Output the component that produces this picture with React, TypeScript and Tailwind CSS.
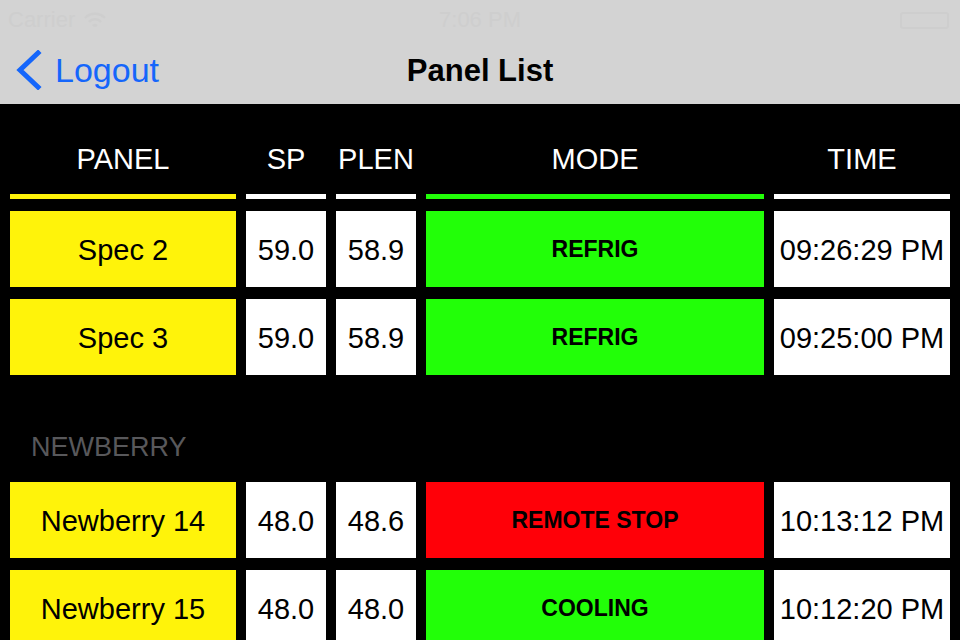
import React from 'react';

type Row = {
  name: string;
  sp: string;
  plen: string;
  mode: string;
  time: string;
};

const modeColor: Record<string, string> = {
  REFRIG: 'bg-[#22ff08]',
  COOLING: 'bg-[#22ff08]',
  'REMOTE STOP': 'bg-[#ff0008]',
};

const specRows: Row[] = [
  { name: 'Spec 2', sp: '59.0', plen: '58.9', mode: 'REFRIG', time: '09:26:29 PM' },
  { name: 'Spec 3', sp: '59.0', plen: '58.9', mode: 'REFRIG', time: '09:25:00 PM' },
];

const newberryRows: Row[] = [
  { name: 'Newberry 14', sp: '48.0', plen: '48.6', mode: 'REMOTE STOP', time: '10:13:12 PM' },
  { name: 'Newberry 15', sp: '48.0', plen: '48.0', mode: 'COOLING', time: '10:12:20 PM' },
];

const cols = 'grid grid-cols-[226px_80px_80px_338px_176px] gap-x-[10px] px-[10px]';

const PanelRow: React.FC<{ row: Row }> = ({ row }) => (
  <div className={`${cols} h-[76px] text-black text-[29px]`}>
    <div className="flex items-center justify-center bg-[#fff30a] pt-[3px]">{row.name}</div>
    <div className="flex items-center justify-center bg-white pt-[3px]">{row.sp}</div>
    <div className="flex items-center justify-center bg-white pt-[3px]">{row.plen}</div>
    <div className={`flex items-center justify-center font-bold text-[23px] pt-[1px] ${modeColor[row.mode]}`}>
      {row.mode}
    </div>
    <div className="flex items-center justify-center bg-white pt-[3px]">{row.time}</div>
  </div>
);

const StatusBar: React.FC = () => (
  <div className="relative h-[40px] text-[#cecece] text-[22px] leading-[40px]">
    <div className="absolute left-[8px] top-0 flex items-center gap-2">
      <span>Carrier</span>
      <svg width="24" height="18" viewBox="0 0 24 18" fill="none" stroke="#cecece" strokeWidth="2.5">
        <path d="M2 7a14 14 0 0 1 20 0" />
        <path d="M6 11a8 8 0 0 1 12 0" />
        <path d="M10 15a3 3 0 0 1 4 0" />
      </svg>
    </div>
    <div className="absolute left-0 right-0 top-0 text-center">7:06 PM</div>
    <div className="absolute right-[11px] top-[12px] w-[49px] h-[17px] border-2 border-[#cecece] rounded-[3px]" />
  </div>
);

export default function App() {
  return (
    <div className="w-[960px] h-[640px] overflow-hidden bg-black" style={{ fontFamily: '"Liberation Sans", Arial, sans-serif' }}>
      <div className="bg-[#d3d3d3] h-[104px]">
        <StatusBar />
        <div className="relative h-[64px]">
          <button className="absolute left-[16px] top-[10px] flex items-center gap-[13px] text-[#1566fb]">
            <svg width="26" height="40" viewBox="0 0 26 40" fill="none" stroke="#1566fb" strokeWidth="5" strokeLinecap="square">
              <path d="M22 3 L4 20 L22 37" />
            </svg>
            <span className="text-[34px] leading-[40px]">Logout</span>
          </button>
          <h1 className="pt-[12px] text-center text-[31px] font-bold leading-[38px] text-black">Panel List</h1>
        </div>
      </div>

      <div className={`${cols} pt-[38px] pb-[18px] text-white text-[29px] leading-[34px]`}>
        <div className="text-center">PANEL</div>
        <div className="text-center">SP</div>
        <div className="text-center">PLEN</div>
        <div className="text-center">MODE</div>
        <div className="text-center">TIME</div>
      </div>

      <div className={`${cols} h-[5px]`}>
        <div className="bg-[#fff30a]" />
        <div className="bg-white" />
        <div className="bg-white" />
        <div className="bg-[#22ff08]" />
        <div className="bg-white" />
      </div>

      <div className="flex flex-col gap-[12px] pt-[12px]">
        {specRows.map((r) => (
          <PanelRow key={r.name} row={r} />
        ))}
      </div>

      <div className="pt-[55px] pb-[18px] pl-[31px] text-[27px] leading-[34px] text-[#58585b]">NEWBERRY</div>

      <div className="flex flex-col gap-[12px]">
        {newberryRows.map((r) => (
          <PanelRow key={r.name} row={r} />
        ))}
      </div>
    </div>
  );
}
